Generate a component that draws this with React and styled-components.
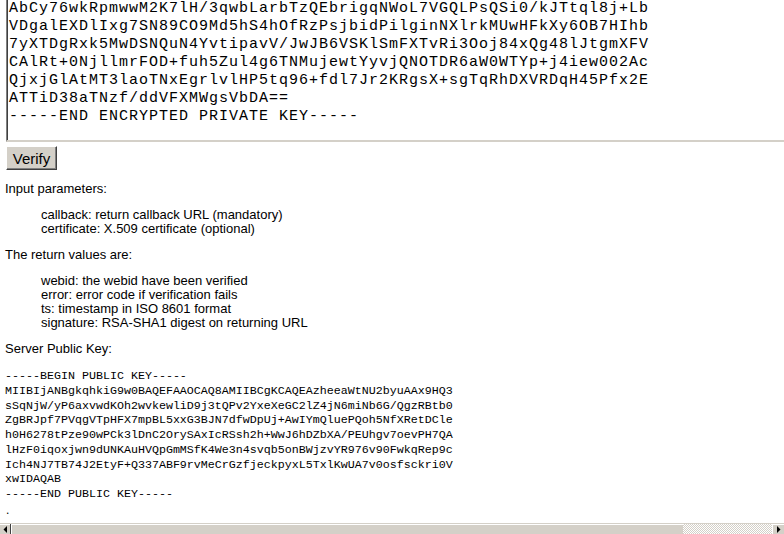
import React from "react";
import styled, { createGlobalStyle } from "styled-components";

const Global = createGlobalStyle`
  html, body { margin: 0; padding: 0; background: #fff; overflow: hidden; }
  #root { width: 784px; height: 534px; }
`;

const Page = styled.div`
  width: 784px;
  height: 534px;
  display: flex;
  flex-direction: column;
  overflow: hidden;
  font-family: "Liberation Sans", Arial, sans-serif;
  color: #000;
`;

const Viewport = styled.div`
  flex: 1;
  min-height: 0;
  overflow: hidden;
  padding: 0 0 0 5px;
`;

const KeyBox = styled.div`
  margin-left: 1px;
  width: 1000px;
  padding: 0 0 14px 2px;
  border-left: 1px solid #808080;
  box-shadow: inset 1px 0 0 #404040;
  border-bottom: 2px solid #d4d0c8;
  font-family: "Liberation Mono", "Courier New", monospace;
  font-size: 15px;
  letter-spacing: 1px;
  line-height: 18px;
  white-space: pre;
`;

const Button = styled.button`
  display: block;
  margin: 4px 0 0 1px;
  width: 51px;
  height: 24px;
  padding: 0;
  background: #d4d0c8;
  border: 1px solid;
  border-color: #fff #404040 #404040 #fff;
  box-shadow: inset -1px -1px 0 #808080;
  font-family: "Liberation Sans", Arial, sans-serif;
  font-size: 15px;
  color: #000;
`;

const Para = styled.div`
  margin-top: 12px;
  font-size: 13px;
  line-height: 14px;
`;

const Indented = styled.div`
  margin-top: 12px;
  padding-left: 36px;
  font-size: 13px;
  line-height: 14px;
`;

const Line = styled.div``;

const PubKey = styled.div`
  margin-top: 13px;
  font-family: "Liberation Mono", "Courier New", monospace;
  font-size: 11.67px;
  line-height: 14.75px;
  white-space: pre;
`;

const Dot = styled.div`
  margin-top: 1px;
  font-size: 12px;
  line-height: 14px;
  padding-left: 1px;
`;

const ScrollBar = styled.div`
  height: 11px;
  flex: none;
  display: flex;
  background: #d4d0c8;
  border-top: 1px solid #d4d0c8;
  box-sizing: border-box;
`;

const ArrowBtn = styled.div`
  width: ${(p) => p.$w}px;
  flex: none;
  display: flex;
  align-items: center;
  justify-content: center;
  background: #d4d0c8;
  box-shadow: inset 0 1px 0 #fff;
  border-left: ${(p) => (p.$right ? "1px solid #fff" : "none")};
  border-right: ${(p) => (p.$right ? "none" : "1px solid #404040")};
  box-sizing: border-box;
`;

const Thumb = styled.div`
  width: 672px;
  flex: none;
  background: #d4d0c8;
  border-left: 1px solid #fff;
  box-shadow: inset 0 1px 0 #fff;
  box-sizing: border-box;
`;

const Track = styled.div`
  flex: 1;
  background-color: #fff;
  background-image: repeating-conic-gradient(#d4d0c8 0 25%, #fff 0 50%);
  background-size: 2px 2px;
`;

const Tri = ({ dir }) => (
  <svg width="4" height="7" viewBox="0 0 4 7">
    {dir === "left" ? (
      <polygon points="4,0 4,7 0.5,3.5" fill="#000" />
    ) : (
      <polygon points="0,0 0,7 3.5,3.5" fill="#000" />
    )}
  </svg>
);

const privKey = [
  "AbCy76wkRpmwwM2K7lH/3qwbLarbTzQEbrigqNWoL7VGQLPsQSi0/kJTtql8j+Lb",
  "VDgalEXDlIxg7SN89CO9Md5hS4hOfRzPsjbidPilginNXlrkMUwHFkXy6OB7HIhb",
  "7yXTDgRxk5MwDSNQuN4YvtipavV/JwJB6VSKlSmFXTvRi3Ooj84xQg48lJtgmXFV",
  "CAlRt+0NjllmrFOD+fuh5Zul4g6TNMujewtYyvjQNOTDR6aW0WTYp+j4iew002Ac",
  "QjxjGlAtMT3laoTNxEgrlvlHP5tq96+fdl7Jr2KRgsX+sgTqRhDXVRDqH45Pfx2E",
  "ATTiD38aTNzf/ddVFXMWgsVbDA==",
  "-----END ENCRYPTED PRIVATE KEY-----",
].join("\n");

const pubKey = [
  "-----BEGIN PUBLIC KEY-----",
  "MIIBIjANBgkqhkiG9w0BAQEFAAOCAQ8AMIIBCgKCAQEAzheeaWtNU2byuAAx9HQ3",
  "sSqNjW/yP6axvwdKOh2wvkewliD9j3tQPv2YxeXeGC2lZ4jN6miNb6G/QgzRBtb0",
  "ZgBRJpf7PVqgVTpHFX7mpBL5xxG3BJN7dfwDpUj+AwIYmQluePQoh5NfXRetDCle",
  "h0H6278tPze90wPCk3lDnC2OrySAxIcRSsh2h+WwJ6hDZbXA/PEUhgv7oevPH7QA",
  "lHzF0iqoxjwn9dUNKAuHVQpGmMSfK4We3n4svqb5onBWjzvYR976v90FwkqRep9c",
  "Ich4NJ7TB74J2EtyF+Q337ABF9rvMeCrGzfjeckpyxL5TxlKwUA7v0osfsckri0V",
  "xwIDAQAB",
  "-----END PUBLIC KEY-----",
].join("\n");

export default function App() {
  return (
    <>
      <Global />
      <Page>
        <Viewport>
          <KeyBox>{privKey}</KeyBox>
          <Button type="button">Verify</Button>
          <Para>Input parameters:</Para>
          <Indented>
            <Line>callback: return callback URL (mandatory)</Line>
            <Line>certificate: X.509 certificate (optional)</Line>
          </Indented>
          <Para>The return values are:</Para>
          <Indented>
            <Line>webid: the webid have been verified</Line>
            <Line>error: error code if verification fails</Line>
            <Line>ts: timestamp in ISO 8601 format</Line>
            <Line>signature: RSA-SHA1 digest on returning URL</Line>
          </Indented>
          <Para>Server Public Key:</Para>
          <PubKey>{pubKey}</PubKey>
          <Dot>.</Dot>
        </Viewport>
        <ScrollBar>
          <ArrowBtn $w={11}>
            <Tri dir="left" />
          </ArrowBtn>
          <Thumb />
          <Track />
          <ArrowBtn $w={12} $right>
            <Tri dir="right" />
          </ArrowBtn>
        </ScrollBar>
      </Page>
    </>
  );
}
